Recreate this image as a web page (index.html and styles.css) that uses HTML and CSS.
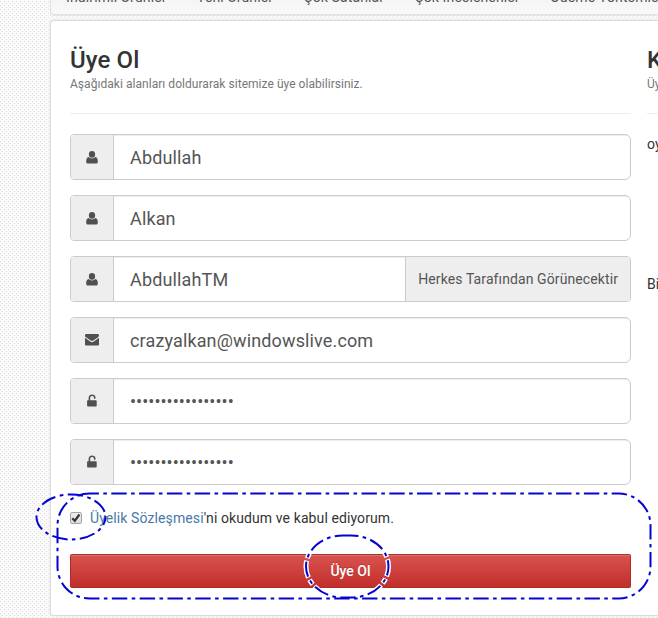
FILE: index.html
```html
<!DOCTYPE html>
<html lang="tr">
<head>
<meta charset="utf-8">
<title>Üye Ol</title>
<link rel="stylesheet" href="styles.css">
</head>
<body>
<svg class="symbols" aria-hidden="true">
  <symbol id="user" viewBox="0 0 12 13"><ellipse cx="6" cy="3.4" rx="3.1" ry="3.3"/><path d="M2.6 6.1C.8 6.4.2 8.3.2 10.4c0 1.5.8 2.2 2 2.2h7.600c1.200 0 2-.7 2-2.200 0-2.100-.6-4-2.400-4.300C8.500 7 7.400 7.500 6 7.500S3.500 7 2.600 6.100z"/></symbol>
  <symbol id="mail" viewBox="0 0 14 12"><path d="M0 1.400C0 .6.500 0 1.300 0h11.400c.8 0 1.300.6 1.300 1.300 0 .9-.6 1.700-1.300 2.200L8.300 6.600c-.9.600-1.700.6-2.600 0L1.300 3.600C.6 3.100 0 2.300 0 1.400z"/><path d="M0 3.800l5.200 3.700c1.300.9 2.300.9 3.600 0L14 3.800v6.400c0 .8-.5 1.300-1.300 1.300H1.300C.5 11.500 0 11 0 10.200z"/></symbol>
  <symbol id="unlock" viewBox="0 0 10 13"><path d="M.6 6.200h1V4C1.600 1.700 3 .5 5 .5s3.500 1.200 3.500 3v.7c0 .9-1.600.9-1.600 0v-.6C6.900 2.600 6.200 2 5.100 2S3.200 2.700 3.200 3.800v2.400h5.700c.5 0 .8.300.8.800v4.700c0 .5-.3.800-.8.800H.9c-.5 0-.8-.3-.8-.8V7c0-.4.200-.7.500-.8z"/></symbol>
</svg>

<nav class="menu">
  <a>İndirimli Ürünler</a><a>Yeni Ürünler</a><a>Çok Satanlar</a><a>Çok İncelenenler</a><a>Ödeme Yöntemleri</a>
</nav>

<main class="panel">
  <section class="signup">
    <header class="heading">
      <h1>Üye Ol</h1>
      <p>Aşağıdaki alanları doldurarak sitemize üye olabilirsiniz.</p>
    </header>
    <form>
      <div class="field"><span class="addon"><svg class="i-user"><use href="#user"/></svg></span><input type="text" value="Abdullah"></div>
      <div class="field"><span class="addon"><svg class="i-user"><use href="#user"/></svg></span><input type="text" value="Alkan"></div>
      <div class="field with-note"><span class="addon"><svg class="i-user"><use href="#user"/></svg></span><input type="text" value="AbdullahTM"><span class="note">Herkes Tarafından Görünecektir</span></div>
      <div class="field"><span class="addon"><svg class="i-mail"><use href="#mail"/></svg></span><input type="text" value="crazyalkan@windowslive.com"></div>
      <div class="field"><span class="addon"><svg class="i-lock"><use href="#unlock"/></svg></span><input class="secret" type="text" value="•••••••••••••••••"></div>
      <div class="field"><span class="addon"><svg class="i-lock"><use href="#unlock"/></svg></span><input class="secret" type="text" value="•••••••••••••••••"></div>
      <label class="terms">
        <span class="check"><svg viewBox="0 0 12 12"><path d="M2.300 6.200l2.500 2.600 4.600-6.300"/></svg></span>
        <span><a>Üyelik Sözleşmesi</a>'ni okudum ve kabul ediyorum.</span>
      </label>
      <button type="button" class="submit">Üye Ol</button>
    </form>
  </section>
  <section class="aside">
    <header class="heading">
      <h1>K</h1>
      <p>Üy</p>
    </header>
    <p class="first">oy</p>
    <p class="second">Bi</p>
  </section>
</main>

<svg class="marks" width="658" height="618" viewBox="0 0 658 618" aria-hidden="true">
  <g class="halo">
    <rect x="306" y="535.500" width="82.500" height="62" rx="37" ry="31"/>
  </g>
  <g class="ink">
    <rect class="area" x="57.500" y="493.500" width="593" height="105" rx="32"/>
    <ellipse class="tick" cx="71" cy="517" rx="34.500" ry="22.500"/>
    <rect x="306" y="535.500" width="82.500" height="62" rx="37" ry="31"/>
  </g>
</svg>
</body>
</html>
```
FILE: styles.css
```css
* { box-sizing: border-box; }

body {
  margin: 0;
  height: 618px;
  overflow: hidden;
  position: relative;
  font: 14px/20px Roboto, sans-serif;
  letter-spacing: .1px;
  color: #333;
  background-color: #fafafa;
  background-image:
    radial-gradient(circle at 0.500px 0.500px, #e0e0e0 0.600px, transparent 0.900px),
    radial-gradient(circle at 2.500px 2.500px, #e0e0e0 0.600px, transparent 0.900px);
  background-size: 4px 4px;
  background-position: 0 1px;
}

.symbols { display: none; }

.menu {
  display: flex;
  gap: 30.200px;
  width: 608px;
  height: 15px;
  margin-left: 50px;
  padding-left: 15px;
  border: solid #e2e2e2;
  border-width: 0 0 1px 1px;
  border-radius: 0 0 0 4px;
  background: linear-gradient(#f5f5f5, #f9f9f9);
  box-shadow: 0 1px 2px rgba(0, 0, 0, .07);
  color: #555;
  white-space: nowrap;
}
.menu a { margin-top: -13px; letter-spacing: .13px; }

.panel {
  display: flex;
  gap: 16px;
  width: 608px;
  height: 596px;
  margin: 5px 0 0 50px;
  padding: 25px 0 0 19px;
  border: 1px solid #dcdcdc;
  border-right: 0;
  border-radius: 4px 0 0 4px;
  background: #fff;
  box-shadow: 0 0 2px rgba(0, 0, 0, .12);
}

.signup { flex: 0 0 561px; }
.aside { flex: 1; min-width: 0; overflow: hidden; }

.heading {
  height: 68px;
  margin-bottom: 20px;
  border-bottom: 1px solid #eee;
}
.heading h1 { margin: 0; font-size: 24px; line-height: 28px; font-weight: 500; }
.heading p { margin: 0; font-size: 12px; line-height: 20px; letter-spacing: .04px; color: #777; }

.first { margin: 0; line-height: 20px; }
.second { margin: 120px 0 0; }

.field {
  display: flex;
  height: 46px;
  margin-bottom: 15px;
  border: 1px solid #ccc;
  border-radius: 4px 6px 6px 4px;
  overflow: hidden;
  background: #fff;
  color: #555;
}
.with-note { border-radius: 4px; }
.field input {
  flex: 1;
  min-width: 0;
  padding: 1px 16px 0;
  border: 0;
  outline: 0;
  background: none;
  box-shadow: inset 0 1px 1px rgba(0, 0, 0, .075);
  color: #555;
  font: 18px/24px Roboto, sans-serif;
  letter-spacing: .14px;
}
.field .secret { letter-spacing: .03px; }
.addon {
  flex: 0 0 43px;
  display: flex;
  align-items: center;
  justify-content: center;
  border-right: 1px solid #ccc;
  background: #eee;
  fill: #505050;
}
.note {
  padding: 12px;
  border-left: 1px solid #ccc;
  background: #eee;
  line-height: 20px;
}
.i-user { width: 12px; height: 13px; }
.i-mail { width: 14px; height: 12px; }
.i-lock { width: 10px; height: 13px; margin-top: -2px; }

.terms {
  display: flex;
  align-items: center;
  gap: 8px;
  height: 20px;
  margin: 23px 0 26px;
}
.terms a { color: #4779a8; }
.check {
  width: 12px;
  height: 12px;
  border: 1px solid #a5a5a5;
  border-radius: 2px;
  background: linear-gradient(#eee, #ddd);
}
.check svg { display: block; width: 12px; height: 12px; margin: -1px; fill: none; stroke: #333; stroke-width: 2.200; }

.submit {
  display: block;
  width: 561px;
  height: 34px;
  padding: 0;
  border: 1px solid #b02c2b;
  border-top-color: #a63532;
  border-radius: 2px;
  background: linear-gradient(#d9534f, #c12e2a);
  box-shadow: inset 0 1px 0 rgba(255, 255, 255, .15);
  color: #fff;
  font: 500 14px/20px Roboto, sans-serif;
  text-shadow: 0 -1px 0 rgba(0, 0, 0, .2);
}

/* Dash-dot callouts lying over the form */
.marks { position: absolute; left: 0; top: 0; fill: none; pointer-events: none; }
.marks .ink { stroke: #0404d0; stroke-width: 2; stroke-dasharray: 15.400 4.400 3.600 4.400; }
.marks .area { stroke-dashoffset: 6; }
.marks .tick { stroke-dashoffset: 7; }
.marks .halo { stroke: #fff; stroke-width: 5; stroke-dasharray: 17.400 2.400 5.600 2.400; stroke-dashoffset: 1; }
```
